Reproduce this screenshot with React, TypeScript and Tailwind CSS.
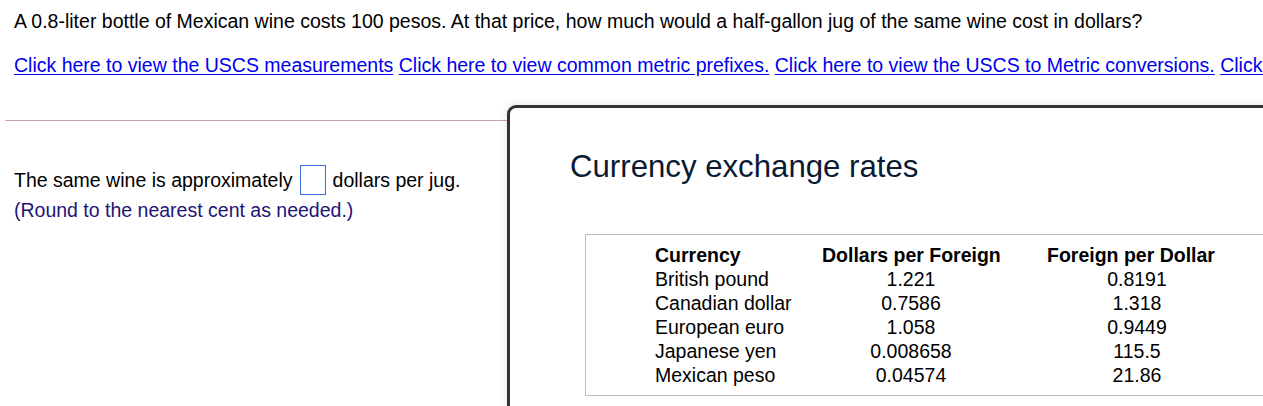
const rates = [
  { name: "British pound", dpf: "1.221", fpd: "0.8191" },
  { name: "Canadian dollar", dpf: "0.7586", fpd: "1.318" },
  { name: "European euro", dpf: "1.058", fpd: "0.9449" },
  { name: "Japanese yen", dpf: "0.008658", fpd: "115.5" },
  { name: "Mexican peso", dpf: "0.04574", fpd: "21.86" },
];

const links = [
  "Click here to view the USCS measurements",
  "Click here to view common metric prefixes.",
  "Click here to view the USCS to Metric conversions.",
  "Click here to view the Metric to USCS conversions.",
];

export default function App() {
  return (
    <div className="relative w-[1263px] h-[406px] overflow-hidden bg-white text-black font-['Liberation_Sans',Arial,sans-serif] text-[19.5px]">
      <p className="pt-[10px] px-[14px] leading-[22px] whitespace-nowrap">
        A 0.8-liter bottle of Mexican wine costs 100 pesos. At that price, how much would a half-gallon jug of the same
        wine cost in dollars?
      </p>

      <div className="mt-[22px] px-[14px] leading-[22px] whitespace-nowrap">
        {links.map((l, i) => (
          <span key={i}>
            <a href="#" className="text-[#0000ee] underline underline-offset-[2px]">
              {l}
            </a>{" "}
          </span>
        ))}
      </div>

      <div className="mt-[44px] ml-[5px] w-[505px] h-px bg-[#c8a2b0]" />

      <div className="mt-[44px] px-[14px]">
        <div className="flex items-center h-[30px] leading-[22px]">
          <span>The same wine is approximately</span>
          <span className="mx-[7px] w-[26px] h-[30px] border border-[#3a6fd8] bg-white" />
          <span>dollars per jug.</span>
        </div>
        <p className="mt-[4px] leading-[22px] text-[#1e1478]">(Round to the nearest cent as needed.)</p>
      </div>

      {/* exchange-rate popup */}
      <div className="absolute left-[507px] top-[105px] w-[800px] h-[340px] bg-white border-[3px] border-[#333333] rounded-tl-[9px] shadow-[0_0_8px_rgba(0,0,0,0.12)] pl-[60px] pt-[40px]">
        <h2 className="text-[31.2px] leading-[38px] text-[#0b1a33]">Currency exchange rates</h2>
        <div className="mt-[48px] ml-[15px] w-[720px] border border-[#bbbbbb] pt-[8px] pb-[8px] pl-[69px]">
          <div className="grid grid-cols-[167px_220px_178px] leading-[24px] whitespace-nowrap">
            <div className="font-bold">Currency</div>
            <div className="font-bold text-center pr-[42px]">Dollars per Foreign</div>
            <div className="font-bold text-center">Foreign per Dollar</div>
            {rates.map((r) => (
              <div key={r.name} className="contents">
                <div>{r.name}</div>
                <div className="text-center pr-[42px]">{r.dpf}</div>
                <div className="text-center pl-[12px]">{r.fpd}</div>
              </div>
            ))}
          </div>
        </div>
      </div>
    </div>
  );
}
